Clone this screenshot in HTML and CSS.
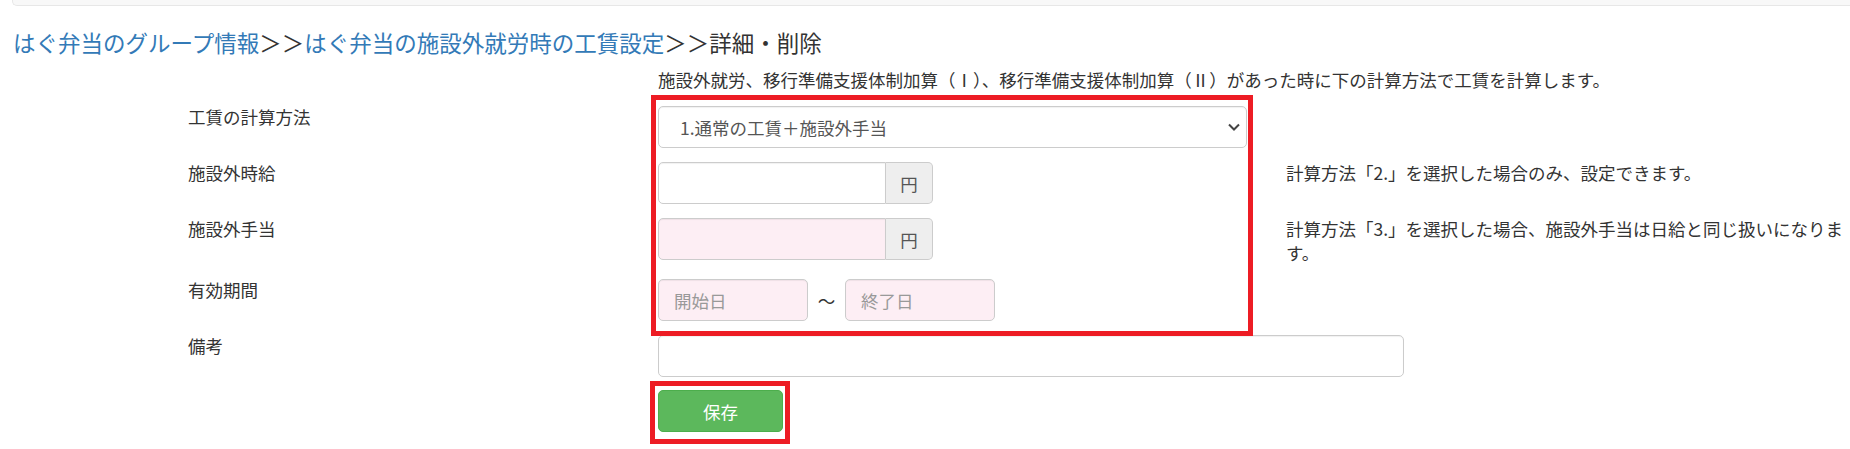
FILE: index.html
```html
<!DOCTYPE html>
<html lang="ja">
<head>
<meta charset="utf-8">
<title>詳細・削除</title>
<link rel="stylesheet" href="styles.css">
</head>
<body>
<div class="topbar"></div>
<h4 class="crumb"><a href="#">はぐ弁当のグループ情報</a><span class="sep">＞＞</span><a href="#">はぐ弁当の施設外就労時の工賃設定</a><span class="sep">＞＞</span><span class="cur">詳細・削除</span></h4>

<form class="form">
  <div class="note">施設外就労、移行準備支援体制加算（Ⅰ）、移行準備支援体制加算（Ⅱ）があった時に下の計算方法で工賃を計算します。</div>

  <label class="lbl r2">工賃の計算方法</label>
  <div class="ctl r2">
    <div class="select">
      <span>1.通常の工賃＋施設外手当</span>
      <svg class="chev" width="12" height="8" viewBox="0 0 12 8"><polyline points="1,1.5 6,6.5 11,1.5" fill="none" stroke="#444" stroke-width="2"/></svg>
    </div>
  </div>

  <label class="lbl r3">施設外時給</label>
  <div class="ctl r3">
    <div class="igroup">
      <input class="inp" type="text">
      <span class="addon">円</span>
    </div>
  </div>
  <div class="help r3">計算方法「2.」を選択した場合のみ、設定できます。</div>

  <label class="lbl r4">施設外手当</label>
  <div class="ctl r4">
    <div class="igroup">
      <input class="inp pink" type="text">
      <span class="addon">円</span>
    </div>
  </div>
  <div class="help r4">計算方法「3.」を選択した場合、施設外手当は日給と同じ扱いになります。</div>

  <label class="lbl r5">有効期間</label>
  <div class="ctl r5">
    <div class="dates">
      <input class="inp pink date" type="text" placeholder="開始日">
      <span class="tilde">～</span>
      <input class="inp pink date" type="text" placeholder="終了日">
    </div>
  </div>

  <label class="lbl r6">備考</label>
  <div class="ctl wide r6">
    <input class="inp remarks" type="text">
  </div>

  <div class="redbox"></div>

  <div class="ctl r7">
    <span class="savebox"><button type="button" class="btn">保存</button></span>
  </div>
</form>
</body>
</html>
```

FILE: styles.css
```css
html, body {
  margin: 0;
  padding: 0;
  background: #fff;
  overflow: hidden;
}
body {
  font-family: "Noto Sans CJK JP", "Noto Sans", sans-serif;
  font-size: 17.5px;
  color: #333;
}
.topbar {
  height: 5px;
  margin-left: 12px;
  background: #f8f8f8;
  border-left: 1px solid #e7e7e7;
  border-bottom: 1px solid #e7e7e7;
  border-bottom-left-radius: 5px;
}
.crumb {
  margin: 21px 0 0 13px;
  font-size: 22.5px;
  font-weight: 400;
  line-height: 30px;
  color: #333;
  white-space: nowrap;
}
.crumb a {
  color: #337ab7;
  text-decoration: none;
}
.form {
  display: grid;
  grid-template-columns: 470px 589px 1fr;
  row-gap: 14px;
  margin: 11px 0 0 188px;
  align-items: start;
}
.note {
  grid-column: 2 / 4;
  grid-row: 1;
  line-height: 24px;
  white-space: nowrap;
}
.lbl {
  grid-column: 1;
  line-height: 22px;
  padding-top: 0;
}
.ctl { grid-column: 2; }
.ctl.wide { grid-column: 2 / 4; }
.help {
  grid-column: 3;
  padding-left: 39px;
  line-height: 24px;
  margin-top: -1px;
}
.r2 { grid-row: 2; }
.r3 { grid-row: 3; }
.r4 { grid-row: 4; }
.r5 { grid-row: 5; }
.r6 { grid-row: 6; }
.r7 { grid-row: 7; margin-top: -10px; }

.select {
  height: 42px;
  box-sizing: border-box;
  border: 1px solid #ccc;
  border-radius: 5px;
  display: flex;
  align-items: center;
  justify-content: space-between;
  padding: 0 6px 0 21px;
  color: #555;
  background: #fff;
  box-shadow: inset 0 1px 1px rgba(0,0,0,0.06);
}
.chev { display: block; }

.igroup {
  display: flex;
  width: 275px;
  height: 42px;
}
.inp {
  box-sizing: border-box;
  height: 42px;
  border: 1px solid #ccc;
  border-radius: 5px;
  background: #fff;
  font-family: inherit;
  font-size: 17.5px;
  color: #555;
  padding: 0 15px;
  margin: 0;
  outline: none;
  box-shadow: inset 0 1px 1px rgba(0,0,0,0.06);
}
.inp::placeholder { color: #999; }
.igroup .inp {
  flex: 1;
  min-width: 0;
  border-top-right-radius: 0;
  border-bottom-right-radius: 0;
}
.pink { background: #fdeef4; }
.addon {
  width: 47px;
  box-sizing: border-box;
  border: 1px solid #ccc;
  border-left: 0;
  border-radius: 0 5px 5px 0;
  background: #eee;
  color: #555;
  display: flex;
  align-items: center;
  justify-content: center;
}
.dates {
  display: flex;
  align-items: center;
}
.date { width: 150px; }
.tilde {
  width: 37px;
  text-align: center;
  color: #333;
}
.remarks { width: 746px; display: block; }

.redbox {
  grid-column: 2;
  grid-row: 2 / 6;
  align-self: stretch;
  margin: -11px -6px -15px -7px;
  border: 5px solid #ed1c24;
  pointer-events: none;
  z-index: 2;
}
.savebox {
  display: inline-block;
  margin-left: -8px;
  padding: 4px 2px 7px 3px;
  border: 5px solid #ed1c24;
}
.btn {
  display: block;
  width: 125px;
  height: 42px;
  box-sizing: border-box;
  background: #5cb85c;
  border: 1px solid #4cae4c;
  border-radius: 5px;
  color: #fff;
  font-family: inherit;
  font-size: 17.5px;
  padding: 0;
}
```
